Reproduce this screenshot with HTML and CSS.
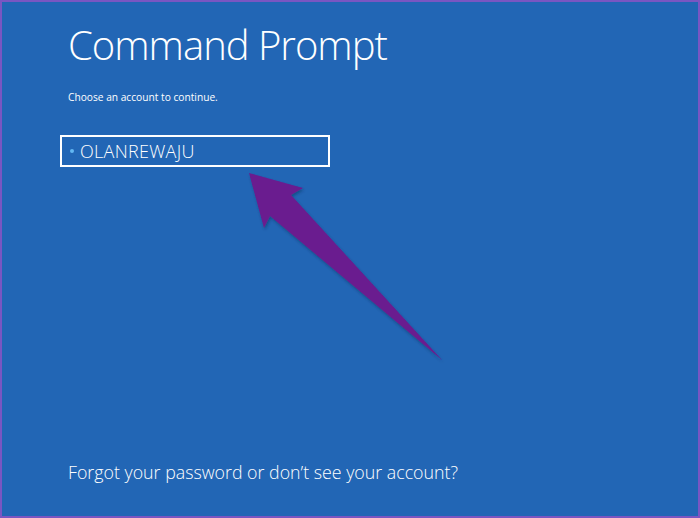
FILE: index.html
```html
<!DOCTYPE html>
<html>
<head>
<meta charset="utf-8">
<link rel="stylesheet" href="styles.css">
</head>
<body>
<div class="screen">
  <h1 class="title">Command Prompt</h1>
  <p class="subtitle">Choose an account to continue.</p>
  <div class="account"><span class="dot"></span><span class="name">OLANREWAJU</span></div>
  <div class="spacer"></div>
  <p class="forgot">Forgot your password or don’t see your account?</p>
  <svg class="arrow" width="700" height="518" viewBox="0 0 700 518">
    <defs>
      <filter id="sh" x="-20%" y="-20%" width="140%" height="140%">
        <feDropShadow dx="1" dy="2" stdDeviation="1.5" flood-color="#0a2a55" flood-opacity="0.45"/>
      </filter>
    </defs>
    <polygon points="249,173 303,188 291,195 442,360 270,216 264,228" fill="#6a1b8f" filter="url(#sh)"/>
  </svg>
</div>
</body>
</html>
```
FILE: styles.css
```css
html, body {
  margin: 0;
  padding: 0;
}
body {
  width: 700px;
  height: 518px;
  overflow: hidden;
}
.screen {
  position: relative;
  box-sizing: border-box;
  width: 700px;
  height: 518px;
  background: #2266b5;
  border: 2px solid #7a56c2;
  padding: 0 0 0 66px;
  display: flex;
  flex-direction: column;
  color: #ffffff;
  font-family: "Open Sans", "Noto Sans", sans-serif;
}
.title {
  margin: 15px 0 0 0;
  font-weight: 300;
  font-size: 40px;
  line-height: 56px;
  letter-spacing: -1px;
}
.subtitle {
  margin: 17px 0 0 0;
  font-size: 10.2px;
  line-height: 14px;
  font-weight: 400;
}
.account {
  margin: 31px 0 0 -8px;
  width: 258px;
  height: 28px;
  border: 2px solid #ffffff;
  display: flex;
  align-items: center;
  padding-left: 8px;
  gap: 6px;
}
.dot {
  width: 4px;
  height: 4px;
  border-radius: 50%;
  background: #62b8f2;
}
.name {
  font-size: 18px;
  font-weight: 300;
  line-height: 28px;
  letter-spacing: 0.3px;
}
.spacer {
  flex: 1;
}
.forgot {
  margin: 0 0 32px 0;
  font-size: 17.8px;
  font-weight: 300;
  line-height: 24px;
  letter-spacing: 0;
}
.arrow {
  position: absolute;
  left: -2px;
  top: -2px;
  pointer-events: none;
}
```
